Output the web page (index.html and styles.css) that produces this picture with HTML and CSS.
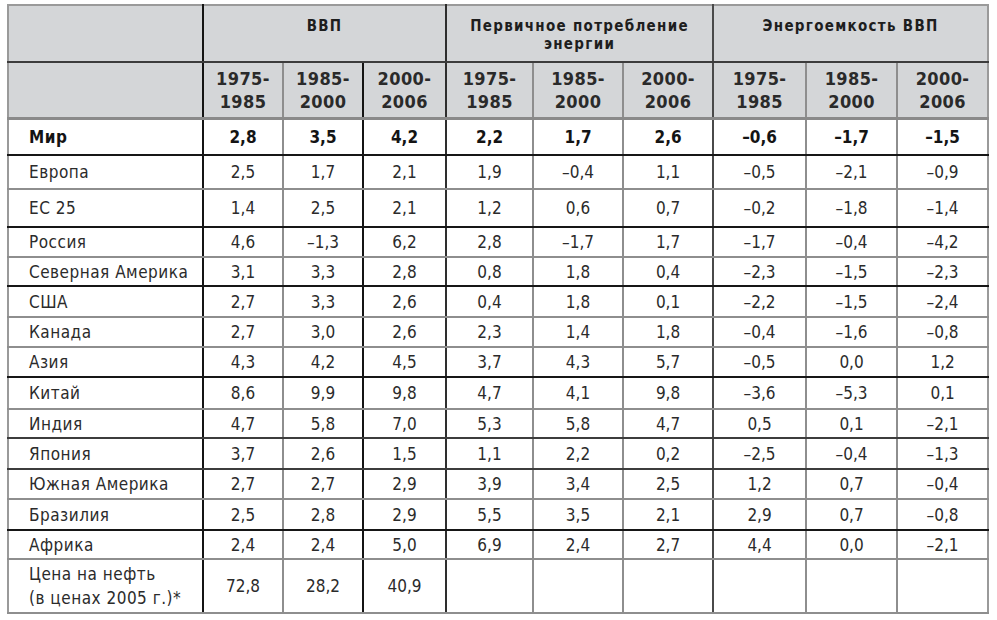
FILE: index.html
```html
<!DOCTYPE html>
<html lang="ru">
<head>
<meta charset="utf-8">
<title>ВВП и энергоемкость</title>
<link rel="stylesheet" href="styles.css">
</head>
<body>
<table class="t">
  <colgroup>
    <col class="c-lab"><col class="c80"><col class="c80"><col class="c83">
    <col class="c87"><col class="c90"><col class="c90">
    <col class="c93"><col class="c91"><col class="c91">
  </colgroup>
  <thead>
    <tr class="h1 b-dk">
      <th class="v0"></th>
      <th colspan="3" class="v3">ВВП</th>
      <th colspan="3" class="v6">Первичное потребление<br>энергии</th>
      <th colspan="3" class="v9">Энергоемкость ВВП</th>
    </tr>
    <tr class="h2 b-hd">
      <th class="v0"></th>
      <th class="v1">1975-<br>1985</th><th class="v2">1985-<br>2000</th><th class="v3">2000-<br>2006</th>
      <th class="v4">1975-<br>1985</th><th class="v5">1985-<br>2000</th><th class="v6">2000-<br>2006</th>
      <th class="v7">1975-<br>1985</th><th class="v8">1985-<br>2000</th><th class="v9">2000-<br>2006</th>
    </tr>
  </thead>
  <tbody>
    <tr class="r-37 b-bk bold"><td class="lab v0">Мир</td><td class="v1">2,8</td><td class="v2">3,5</td><td class="v3">4,2</td><td class="v4">2,2</td><td class="v5">1,7</td><td class="v6">2,6</td><td class="v7">–0,6</td><td class="v8">–1,7</td><td class="v9">–1,5</td></tr>
    <tr class="r-34 b-gr"><td class="lab v0">Европа</td><td class="v1">2,5</td><td class="v2">1,7</td><td class="v3">2,1</td><td class="v4">1,9</td><td class="v5">–0,4</td><td class="v6">1,1</td><td class="v7">–0,5</td><td class="v8">–2,1</td><td class="v9">–0,9</td></tr>
    <tr class="r-38 b-bk"><td class="lab v0">ЕС 25</td><td class="v1">1,4</td><td class="v2">2,5</td><td class="v3">2,1</td><td class="v4">1,2</td><td class="v5">0,6</td><td class="v6">0,7</td><td class="v7">–0,2</td><td class="v8">–1,8</td><td class="v9">–1,4</td></tr>
    <tr class="r-30 b-gr"><td class="lab v0">Россия</td><td class="v1">4,6</td><td class="v2">–1,3</td><td class="v3">6,2</td><td class="v4">2,8</td><td class="v5">–1,7</td><td class="v6">1,7</td><td class="v7">–1,7</td><td class="v8">–0,4</td><td class="v9">–4,2</td></tr>
    <tr class="r-29 b-bk"><td class="lab v0">Северная Америка</td><td class="v1">3,1</td><td class="v2">3,3</td><td class="v3">2,8</td><td class="v4">0,8</td><td class="v5">1,8</td><td class="v6">0,4</td><td class="v7">–2,3</td><td class="v8">–1,5</td><td class="v9">–2,3</td></tr>
    <tr class="r-31 b-gr"><td class="lab v0">США</td><td class="v1">2,7</td><td class="v2">3,3</td><td class="v3">2,6</td><td class="v4">0,4</td><td class="v5">1,8</td><td class="v6">0,1</td><td class="v7">–2,2</td><td class="v8">–1,5</td><td class="v9">–2,4</td></tr>
    <tr class="r-30 b-gr"><td class="lab v0">Канада</td><td class="v1">2,7</td><td class="v2">3,0</td><td class="v3">2,6</td><td class="v4">2,3</td><td class="v5">1,4</td><td class="v6">1,8</td><td class="v7">–0,4</td><td class="v8">–1,6</td><td class="v9">–0,8</td></tr>
    <tr class="r-30 b-bk"><td class="lab v0">Азия</td><td class="v1">4,3</td><td class="v2">4,2</td><td class="v3">4,5</td><td class="v4">3,7</td><td class="v5">4,3</td><td class="v6">5,7</td><td class="v7">–0,5</td><td class="v8">0,0</td><td class="v9">1,2</td></tr>
    <tr class="r-32 b-gr"><td class="lab v0">Китай</td><td class="v1">8,6</td><td class="v2">9,9</td><td class="v3">9,8</td><td class="v4">4,7</td><td class="v5">4,1</td><td class="v6">9,8</td><td class="v7">–3,6</td><td class="v8">–5,3</td><td class="v9">0,1</td></tr>
    <tr class="r-29 b-dk"><td class="lab v0">Индия</td><td class="v1">4,7</td><td class="v2">5,8</td><td class="v3">7,0</td><td class="v4">5,3</td><td class="v5">5,8</td><td class="v6">4,7</td><td class="v7">0,5</td><td class="v8">0,1</td><td class="v9">–2,1</td></tr>
    <tr class="r-31 b-dk"><td class="lab v0">Япония</td><td class="v1">3,7</td><td class="v2">2,6</td><td class="v3">1,5</td><td class="v4">1,1</td><td class="v5">2,2</td><td class="v6">0,2</td><td class="v7">–2,5</td><td class="v8">–0,4</td><td class="v9">–1,3</td></tr>
    <tr class="r-30 b-gr"><td class="lab v0">Южная Америка</td><td class="v1">2,7</td><td class="v2">2,7</td><td class="v3">2,9</td><td class="v4">3,9</td><td class="v5">3,4</td><td class="v6">2,5</td><td class="v7">1,2</td><td class="v8">0,7</td><td class="v9">–0,4</td></tr>
    <tr class="r-31 b-bk"><td class="lab v0">Бразилия</td><td class="v1">2,5</td><td class="v2">2,8</td><td class="v3">2,9</td><td class="v4">5,5</td><td class="v5">3,5</td><td class="v6">2,1</td><td class="v7">2,9</td><td class="v8">0,7</td><td class="v9">–0,8</td></tr>
    <tr class="r-29 b-gr"><td class="lab v0">Африка</td><td class="v1">2,4</td><td class="v2">2,4</td><td class="v3">5,0</td><td class="v4">6,9</td><td class="v5">2,4</td><td class="v6">2,7</td><td class="v7">4,4</td><td class="v8">0,0</td><td class="v9">–2,1</td></tr>
    <tr class="r-54 b-gr"><td class="lab two v0">Цена на нефть<br>(в ценах 2005 г.)*</td><td class="v1">72,8</td><td class="v2">28,2</td><td class="v3">40,9</td><td class="v4"></td><td class="v5"></td><td class="v6"></td><td class="v7"></td><td class="v8"></td><td class="v9"></td></tr>
  </tbody>
</table>
</body>
</html>
```

FILE: styles.css
```css
html, body {
  background: #ffffff;
}
body {
  margin: 4px 0 0 7px;
  font-family: "Liberation Sans Narrow", "DejaVu Sans Condensed", "Liberation Sans", sans-serif;
  color: #2b2b2b;
}
.t {
  border-collapse: collapse;
  table-layout: fixed;
  width: 982px;
  border-top: 2px solid #9a9a9a;
  border-left: 2px solid #9a9a9a;
}
.c-lab { width: 195px; }
.c80 { width: 80px; }
.c83 { width: 83px; }
.c87 { width: 87px; }
.c90 { width: 90px; }
.c91 { width: 91px; }
.c93 { width: 93px; }

th, td {
  padding: 0;
  text-align: center;
  vertical-align: middle;
  font-size: 17px;
  line-height: 22px;
}

/* header */
thead th {
  background: #d4d6d8;
  color: #1e1e1e;
}
.h1 { height: 57px; }
.h1 th {
  vertical-align: top;
  padding-top: 11px;
  font-size: 15px;
  line-height: 18px;
  font-weight: bold;
  letter-spacing: 1.3px;
}
.h2 { height: 56px; }
.h2 th {
  font-size: 18px;
  line-height: 23px;
  font-weight: bold;
  letter-spacing: 0.4px;
  color: #2a2a2a;
}

/* row heights */
.r-29 { height: 29px; }
.r-30 { height: 30px; }
.r-31 { height: 31px; }
.r-32 { height: 32px; }
.r-34 { height: 34px; }
.r-37 { height: 37px; }
.r-38 { height: 38px; }
.r-54 { height: 54px; }

/* horizontal rules */
.b-bk > * { border-bottom: 2px solid #161616; }
.b-dk > * { border-bottom: 2px solid #3c3c3c; }
.b-gr > * { border-bottom: 2px solid #8e8e8e; }
.b-hd > * { border-bottom: 3px solid #8a8a8a; }

/* vertical rules */
.v0 { border-right: 2px solid #141414; }
.v1 { border-right: 2px solid #8e8e8e; }
.v2 { border-right: 2px solid #141414; }
.v3 { border-right: 2px solid #2e2e2e; }
.v4 { border-right: 2px solid #8e8e8e; }
.v5 { border-right: 2px solid #8e8e8e; }
.v6 { border-right: 2px solid #4a4a4a; }
.v7 { border-right: 2px solid #8e8e8e; }
.v8 { border-right: 2px solid #8e8e8e; }
.v9 { border-right: 2px solid #9a9a9a; }

.lab {
  text-align: left;
  padding-left: 20px;
  letter-spacing: 0.5px;
}
.two {
  line-height: 24px;
}
.bold td {
  font-weight: bold;
  color: #141414;
}
```
